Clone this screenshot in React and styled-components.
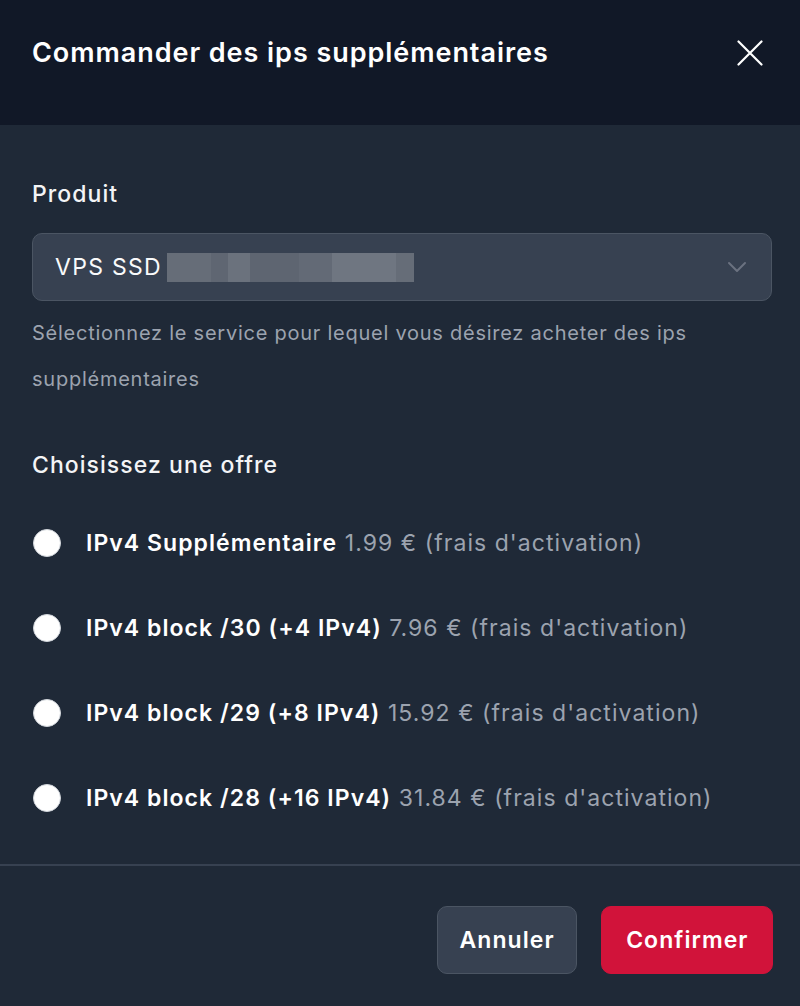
import React from "react";
import styled, { createGlobalStyle } from "styled-components";

const Global = createGlobalStyle`
  html, body { margin: 0; padding: 0; background: #1f2937; }
  body { font-family: Inter, "Noto Sans", sans-serif; -webkit-font-smoothing: antialiased; }
  * { box-sizing: border-box; }
`;

const Modal = styled.div`
  width: 800px;
  height: 1006px;
  display: flex;
  flex-direction: column;
  background: #1f2937;
  color: #f9fafb;
`;

const Header = styled.header`
  height: 125px;
  flex-shrink: 0;
  background: #111827;
  display: flex;
  align-items: center;
  justify-content: space-between;
  padding: 0 32px 20px 32px;
`;

const Title = styled.h2`
  margin: 0;
  font-size: 27px;
  font-weight: 600;
  letter-spacing: 0.95px;
  color: #ffffff;
`;

const CloseButton = styled.button`
  background: none;
  border: none;
  padding: 0;
  width: 36px;
  height: 36px;
  display: flex;
  align-items: center;
  justify-content: center;
  color: #ffffff;
  cursor: pointer;
`;

const Body = styled.div`
  flex: 1;
  padding: 54px 28px 0 32px;
  display: flex;
  flex-direction: column;
`;

const Label = styled.div`
  font-size: 23px;
  font-weight: 500;
  color: #f3f4f6;
  line-height: 30px;
  letter-spacing: 1.05px;
`;

const Select = styled.div`
  margin-top: 24px;
  height: 68px;
  background: #374151;
  border: 1.5px solid #4b5563;
  border-radius: 10px;
  display: flex;
  align-items: center;
  justify-content: space-between;
  padding: 0 24px 0 22px;
`;

const SelectValue = styled.div`
  display: flex;
  align-items: center;
  font-size: 23px;
  color: #f9fafb;
  letter-spacing: 1.3px;
`;

const Blur = styled.div`
  display: flex;
  height: 29px;
  margin-left: 5px;
`;

const BlurCell = styled.span`
  display: block;
  height: 100%;
  width: ${(p) => p.$w}px;
  background: ${(p) => p.$c};
`;

const Help = styled.p`
  margin: 9px 0 0 0;
  font-size: 20px;
  line-height: 46px;
  color: #9ca3af;
  letter-spacing: 0.75px;
`;

const Section = styled.div`
  margin-top: 48px;
`;

const Options = styled.div`
  margin-top: 43px;
  display: flex;
  flex-direction: column;
  gap: 45px;
`;

const Option = styled.label`
  display: flex;
  align-items: center;
  gap: 25px;
  height: 40px;
  font-size: 23px;
  letter-spacing: 1.05px;
  cursor: pointer;
`;

const Radio = styled.span`
  width: 28px;
  height: 28px;
  border-radius: 50%;
  background: #ffffff;
  border: 1px solid #d1d5db;
  flex-shrink: 0;
  margin-left: 1px;
`;

const OptionName = styled.span`
  font-weight: 600;
  color: #ffffff;
`;

const OptionPrice = styled.span`
  color: #9ca3af;
  font-weight: 400;
`;

const Footer = styled.footer`
  border-top: 2px solid #374151;
  height: 142px;
  flex-shrink: 0;
  display: flex;
  justify-content: flex-end;
  align-items: flex-start;
  gap: 24px;
  padding: 40px 27px 0 0;
`;

const Button = styled.button`
  height: 68px;
  padding: 0 ${(p) => (p.$primary ? 23.5 : 21)}px 0 ${(p) => (p.$primary ? 24.5 : 22)}px;
  border-radius: 10px;
  font-family: inherit;
  font-size: 23px;
  font-weight: 600;
  letter-spacing: 1.05px;
  color: #ffffff;
  background: ${(p) => (p.$primary ? "#d1133a" : "#374151")};
  border: 1.5px solid ${(p) => (p.$primary ? "#d1133a" : "#4b5563")};
  cursor: pointer;
`;

const blur = [
  [44, "#666d78"],
  [17, "#5f6672"],
  [22, "#6b727d"],
  [49, "#5e6571"],
  [33, "#636a76"],
  [64, "#6f7681"],
  [18, "#666d78"],
];

const options = [
  ["IPv4 Supplémentaire", "1.99 € (frais d'activation)"],
  ["IPv4 block /30 (+4 IPv4)", "7.96 € (frais d'activation)"],
  ["IPv4 block /29 (+8 IPv4)", "15.92 € (frais d'activation)"],
  ["IPv4 block /28 (+16 IPv4)", "31.84 € (frais d'activation)"],
];

export default function App() {
  return (
    <>
      <Global />
      <Modal>
        <Header>
          <Title>Commander des ips supplémentaires</Title>
          <CloseButton aria-label="Fermer">
            <svg width="26" height="26" viewBox="0 0 26 26" fill="none">
              <path d="M1.5 1.5L24.5 24.5M24.5 1.5L1.5 24.5" stroke="currentColor" strokeWidth="2.2" strokeLinecap="round" />
            </svg>
          </CloseButton>
        </Header>
        <Body>
          <Label>Produit</Label>
          <Select>
            <SelectValue>
              VPS SSD
              <Blur>
                {blur.map(([w, c], i) => (
                  <BlurCell key={i} $w={w} $c={c} />
                ))}
              </Blur>
            </SelectValue>
            <svg width="20" height="12" viewBox="0 0 20 12" fill="none">
              <path d="M2 2L10 10L18 2" stroke="#6b7280" strokeWidth="2" strokeLinecap="round" strokeLinejoin="round" />
            </svg>
          </Select>
          <Help>Sélectionnez le service pour lequel vous désirez acheter des ips supplémentaires</Help>
          <Section>
            <Label>Choisissez une offre</Label>
            <Options>
              {options.map(([name, price]) => (
                <Option key={name}>
                  <Radio />
                  <span>
                    <OptionName>{name}</OptionName> <OptionPrice>{price}</OptionPrice>
                  </span>
                </Option>
              ))}
            </Options>
          </Section>
        </Body>
        <Footer>
          <Button>Annuler</Button>
          <Button $primary>Confirmer</Button>
        </Footer>
      </Modal>
    </>
  );
}
